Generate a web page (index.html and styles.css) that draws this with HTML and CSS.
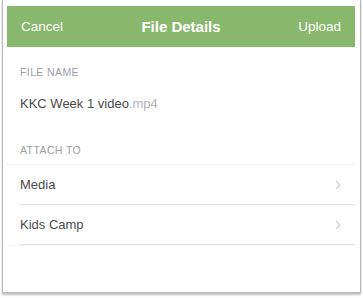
FILE: index.html
```html
<!DOCTYPE html>
<html>
<head>
<meta charset="utf-8">
<link rel="stylesheet" href="styles.css">
</head>
<body>
<div class="frame">
  <div class="screen">
    <header class="navbar">
      <span class="nav-btn">Cancel</span>
      <span class="nav-title">File Details</span>
      <span class="nav-btn">Upload</span>
    </header>
    <div class="label first">FILE NAME</div>
    <div class="filename">KKC Week 1 video<span class="ext">.mp4</span></div>
    <div class="label second">ATTACH TO</div>
    <ul class="list">
      <li class="row"><span>Media</span><svg class="chev" width="6" height="10" viewBox="0 0 6 10"><path d="M1 1 L5 5 L1 9" fill="none" stroke="#cfcfd2" stroke-width="1.1"/></svg></li>
      <li class="row"><span>Kids Camp</span><svg class="chev" width="6" height="10" viewBox="0 0 6 10"><path d="M1 1 L5 5 L1 9" fill="none" stroke="#cfcfd2" stroke-width="1.1"/></svg></li>
    </ul>
  </div>
</div>
</body>
</html>
```
FILE: styles.css
```css
html, body {
  margin: 0;
  padding: 0;
  background: #ffffff;
}
body {
  font-family: "Liberation Sans", Arial, sans-serif;
  width: 363px;
  height: 298px;
  overflow: hidden;
}
.frame {
  margin-left: 2px;
  width: 359px;
  height: 293px;
  border: 1px solid #b9b9b9;
  border-top: none;
  box-shadow: 0 2px 2px rgba(0,0,0,0.25);
  padding: 6px 4px 0 4px;
  box-sizing: border-box;
  background: #fff;
}
.screen {
  width: 348px;
}
.navbar {
  height: 41px;
  background: #88b86c;
  display: flex;
  align-items: center;
  justify-content: space-between;
  padding: 0 14px 0 14px;
  color: #fff;
}
.nav-btn {
  font-size: 13.5px;
  width: 60px;
}
.nav-btn:last-child {
  text-align: right;
}
.nav-title {
  font-size: 15px;
  font-weight: bold;
}
.label {
  font-size: 10.5px;
  line-height: 14px;
  color: #a0a0a4;
  padding-left: 13px;
  letter-spacing: 0.4px;
}
.label.first {
  margin-top: 18px;
}
.filename {
  margin-top: 17px;
  font-size: 13px;
  line-height: 16px;
  color: #4a4a4a;
  padding-left: 13px;
}
.ext {
  color: #b4b4b8;
}
.label.second {
  margin-top: 31px;
  padding-bottom: 7px;
  border-bottom: 1px solid #f1f1f3;
}
.list {
  list-style: none;
  margin: 0;
  padding: 0;
  border-bottom: 1px solid #f4f4f4;
}
.row {
  margin-left: 13px;
  height: 40px;
  box-sizing: border-box;
  border-bottom: 1px solid #e2e2e4;
  display: flex;
  align-items: center;
  justify-content: space-between;
  padding-right: 14px;
  font-size: 13px;
  color: #4a4a4a;
}
.chev {
  display: block;
}
```
